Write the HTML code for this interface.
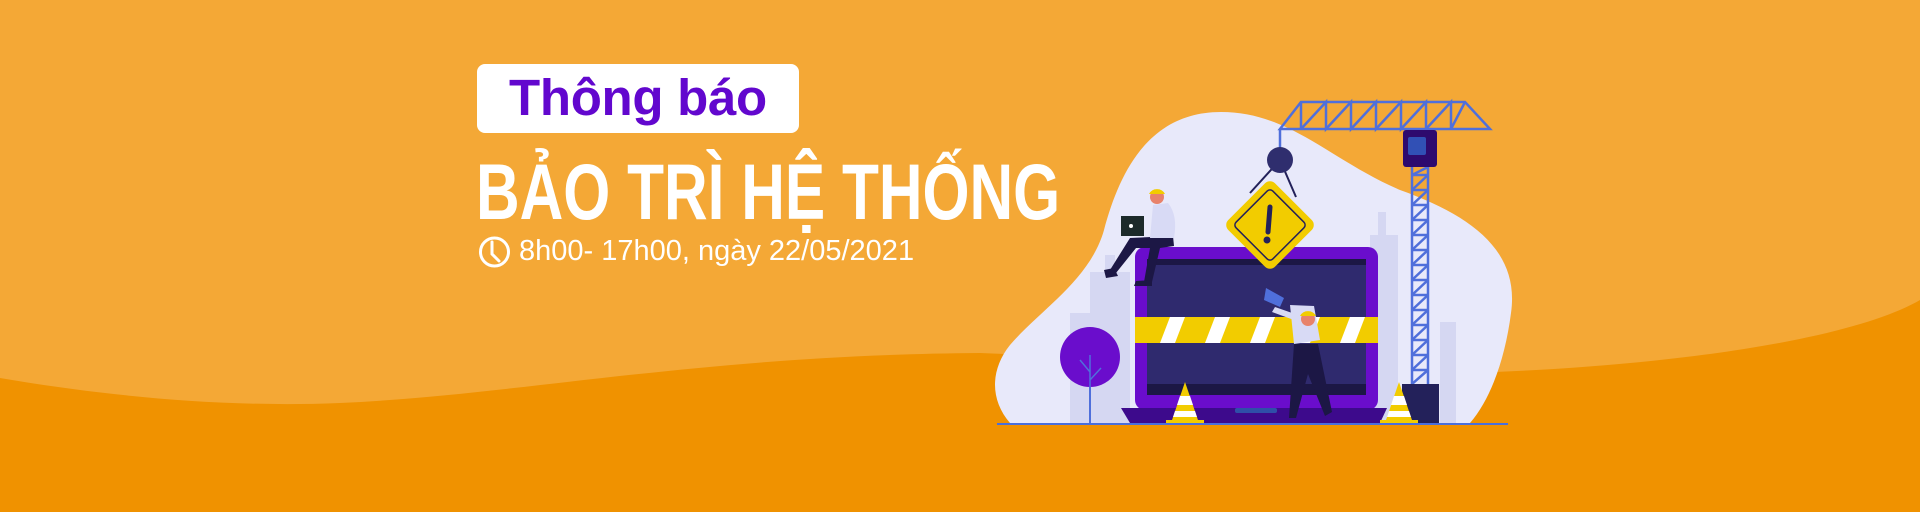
<!DOCTYPE html>
<html><head><meta charset="utf-8"><style>
html,body{margin:0;padding:0}
body{width:1920px;height:512px;overflow:hidden;position:relative;background:#F4A836;font-family:"Liberation Sans",sans-serif}
svg{position:absolute;left:0;top:0}
.badge{position:absolute;left:477px;top:64px;width:322px;height:69px;background:#fff;border-radius:8px}
.badge span{position:absolute;left:32px;top:4px;font-weight:bold;font-size:51px;color:#6207CE;line-height:60px;letter-spacing:-0.3px}
.title{position:absolute;left:476px;top:152px;font-weight:bold;font-size:79px;color:#fff;line-height:80px;white-space:nowrap;transform:scaleX(0.765);transform-origin:left top}
.time{position:absolute;left:519px;top:235px;font-size:29px;color:#fff;line-height:32px;white-space:nowrap}
</style></head><body>
<svg width="1920" height="512" viewBox="0 0 1920 512">
<path d="M0 378 C100 395 220 408 340 403 C520 395 700 355 980 353 L1470 373 C1700 365 1860 335 1920 300 L1920 512 L0 512 Z" fill="#F09200"/>
<path d="M1104 230 C1120 170 1150 112 1221 112 C1290 112 1330 160 1400 190 C1470 215 1520 250 1511 313 C1505 360 1490 400 1470 423 L1010 423 C990 400 990 370 1010 345 C1040 310 1090 280 1104 230 Z" fill="#E8E9FA"/>
<g fill="#D5D7F2">
<rect x="1070" y="313" width="45" height="110"/>
<rect x="1090" y="272" width="40" height="151"/>
<rect x="1105" y="255" width="10" height="20"/>
<rect x="1370" y="235" width="28" height="188"/>
<rect x="1378" y="212" width="8" height="25"/>
<rect x="1440" y="322" width="16" height="101"/>
</g>
<g stroke="#4F6FDB" stroke-width="2.5" fill="none">
<path d="M1280 129 L1490 129 L1465 102 L1301 102 Z"/>
<path d="M1301 102 L1301 129 M1301 129 L1326 102 L1326 129 L1351 102 L1351 129 L1376 102 L1376 129 L1401 102 L1401 129 L1426 102 L1426 129 L1451 102 L1451 129 L1465 102"/>
<path d="M1280 129 L1280 160"/>
<path d="M1412 167 L1412 384 M1428 167 L1428 384"/>
<path d="M1412 175 L1428 167 M1412 190 L1428 175 M1412 205 L1428 190 M1412 220 L1428 205 M1412 235 L1428 220 M1412 250 L1428 235 M1412 265 L1428 250 M1412 280 L1428 265 M1412 295 L1428 280 M1412 310 L1428 295 M1412 325 L1428 310 M1412 340 L1428 325 M1412 355 L1428 340 M1412 370 L1428 355 M1412 384 L1428 370"/>
<path d="M1412 175 L1428 175 M1412 190 L1428 190 M1412 205 L1428 205 M1412 220 L1428 220 M1412 235 L1428 235 M1412 250 L1428 250 M1412 265 L1428 265 M1412 280 L1428 280 M1412 295 L1428 295 M1412 310 L1428 310 M1412 325 L1428 325 M1412 340 L1428 340 M1412 355 L1428 355 M1412 370 L1428 370"/>
</g>
<rect x="1403" y="130" width="34" height="37" rx="3" fill="#2E0A6E"/>
<rect x="1408" y="137" width="18" height="18" rx="2" fill="#3150B5"/>
<rect x="1402" y="384" width="37" height="39" fill="#23215A"/>
<line x1="1090" y1="357" x2="1090" y2="423" stroke="#4F6FDB" stroke-width="2"/>
<circle cx="1090" cy="357" r="30" fill="#6A0DCC"/>
<path d="M1090 355 L1090 390 M1090 372 L1080 360 M1090 380 L1101 368" stroke="#4F6FDB" stroke-width="1.5" fill="none"/>
<rect x="1135" y="247" width="243" height="163" rx="10" fill="#6A0DCC"/>
<rect x="1147" y="259" width="219" height="136" fill="#2F2A6E"/>
<rect x="1147" y="259" width="219" height="6" fill="#1C1745"/>
<rect x="1147" y="384" width="219" height="11" fill="#1C1745"/>
<path d="M1121 408 L1387 408 L1380 423 L1130 423 Z" fill="#3D0A8C"/>
<rect x="1235" y="408" width="42" height="5" rx="2" fill="#2F4FA8"/>
<rect x="1135" y="317" width="243" height="26" fill="#F2CC00"/>
<g fill="#fff"><path d="M1160 343 L1170 317 L1185 317 L1175 343Z"/><path d="M1205 343 L1215 317 L1230 317 L1220 343Z"/><path d="M1250 343 L1260 317 L1275 317 L1265 343Z"/><path d="M1295 343 L1305 317 L1320 317 L1310 343Z"/><path d="M1340 343 L1350 317 L1365 317 L1355 343Z"/></g>
<path d="M1250 193 L1280 160 L1296 197" stroke="#23215A" stroke-width="2" fill="none"/>
<circle cx="1280" cy="160" r="13" fill="#2F2E6E"/>
<g transform="translate(1270 225) rotate(45)"><rect x="-33" y="-33" width="66" height="66" rx="7" fill="#F2CC00"/><rect x="-26" y="-26" width="52" height="52" rx="4" fill="none" stroke="#23215A" stroke-width="1.5"/></g>
<path d="M1270 207 L1268 232" stroke="#23215A" stroke-width="5" stroke-linecap="round"/>
<circle cx="1267" cy="240" r="3.5" fill="#23215A"/>
<!-- sitting worker -->
<path d="M1173 236 L1130 238 L1110 270 L1116 273 L1136 248 L1150 248 L1144 282 L1152 282 L1160 248 L1174 246 Z" fill="#1C1745"/>
<path d="M1104 270 L1114 268 L1118 276 L1106 278Z M1136 281 L1152 280 L1152 286 L1134 286Z" fill="#1C1745"/>
<path d="M1153 205 L1168 203 Q1178 215 1174 238 L1150 238 Z" fill="#D8DAF5"/>
<rect x="1121" y="216" width="23" height="20" fill="#1C2A2A"/>
<circle cx="1131" cy="226" r="2" fill="#fff"/>
<circle cx="1157" cy="197" r="7" fill="#E8826B"/>
<path d="M1149 194 A9 9 0 0 1 1165 194 Z" fill="#F2CC00"/>
<!-- walking worker -->
<path d="M1266 288 L1264 300 L1280 307 L1284 298 Z" fill="#4F6FDB"/>
<path d="M1290 305 L1314 306 L1320 340 L1294 344 Z" fill="#D8DAF5"/>
<path d="M1275 307 L1295 314 L1294 320 L1272 312 Z" fill="#D8DAF5"/>
<path d="M1294 344 L1318 344 L1332 412 L1325 416 L1308 374 L1296 418 L1289 418 Z" fill="#1C1745"/>
<circle cx="1308" cy="319" r="7" fill="#E8826B"/>
<path d="M1300 316 A9 9 0 0 1 1316 316 Z" fill="#F2CC00"/>
<g><path d="M1185 382 L1171 423 L1199 423 Z" fill="#F2CC00"/><path d="M1180 396 L1190 396 L1193 405 L1177 405Z M1175 411 L1195 411 L1197 417 L1173 417Z" fill="#fff"/><rect x="1166" y="420" width="38" height="4" fill="#F2CC00"/></g>
<g><path d="M1399 382 L1385 423 L1413 423 Z" fill="#F2CC00"/><path d="M1394 396 L1404 396 L1407 405 L1391 405Z M1389 411 L1409 411 L1411 417 L1387 417Z" fill="#fff"/><rect x="1380" y="420" width="38" height="4" fill="#F2CC00"/></g>
<line x1="997" y1="424" x2="1508" y2="424" stroke="#4A6FDC" stroke-width="2"/>
<circle cx="494.5" cy="252" r="14" fill="none" stroke="#fff" stroke-width="3"/>
<path d="M492 242 L492 254 L499 261" stroke="#fff" stroke-width="3" fill="none" stroke-linecap="round"/>
</svg>
<div class="badge"><span>Thông báo</span></div>
<div class="title">BẢO TRÌ HỆ THỐNG</div>
<div class="time">8h00- 17h00, ngày 22/05/2021</div>
</body></html>
